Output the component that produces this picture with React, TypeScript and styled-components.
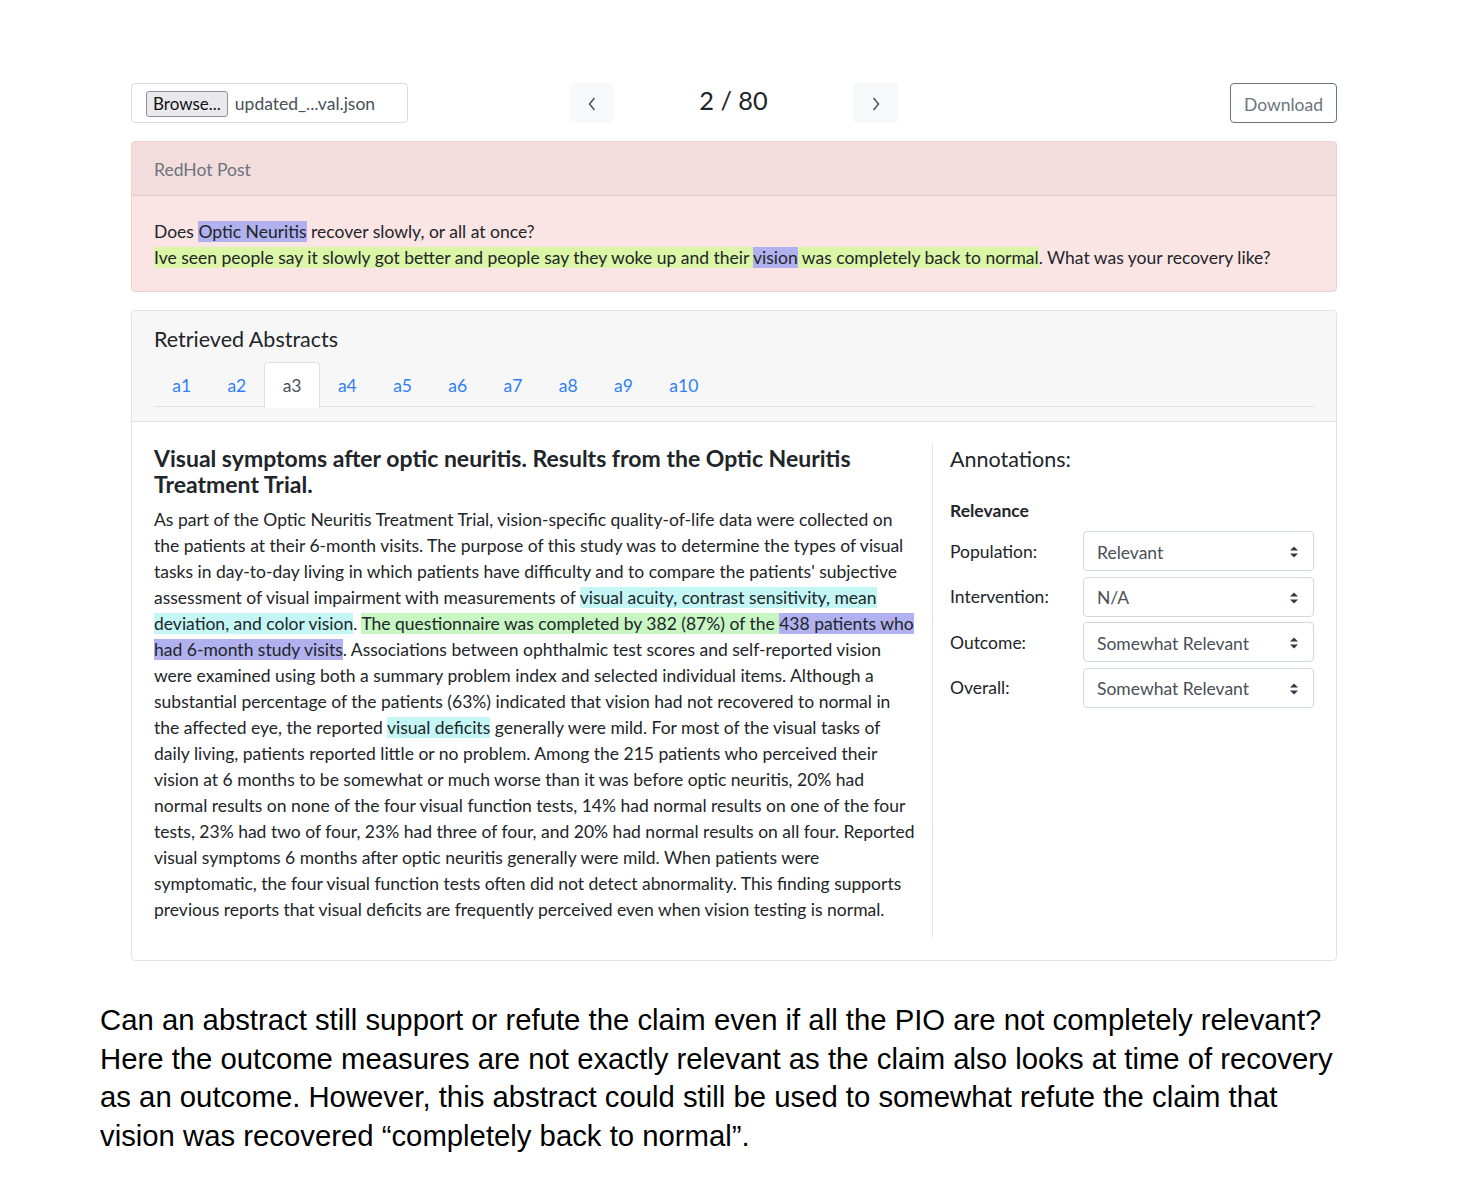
import React from "react";
import styled, { createGlobalStyle } from "styled-components";

const Global = createGlobalStyle`
  html, body { margin: 0; padding: 0; background: #fff; }
  body { font-family: Lato, "Noto Sans", sans-serif; color: #212529; }
  * { box-sizing: border-box; }
`;

const Page = styled.div`
  padding-top: 83px;
  padding-bottom: 30px;
`;

const Container = styled.div`
  width: 1206px;
  margin-left: 131px;
`;

const Toolbar = styled.div`
  display: flex;
  align-items: center;
  height: 40px;
`;

const FileBox = styled.div`
  width: 277px;
  height: 40px;
  border: 1px solid #d9dde1;
  border-radius: 4px;
  display: flex;
  align-items: center;
  padding: 1px 0 0 14px;
  gap: 7px;
  font-size: 17.5px;
`;

const BrowseBtn = styled.div`
  height: 26px;
  padding: 0 6px;
  border: 1px solid #8f8f9d;
  border-radius: 3px;
  background: #e9e9ed;
  color: #111;
  font-size: 17px;
  display: flex;
  align-items: center;
`;

const FileName = styled.span`
  color: #495057;
`;

const Pager = styled.div`
  display: flex;
  align-items: center;
  margin-left: 161px;
`;

const NavBtn = styled.div`
  width: 45px;
  height: 40px;
  border-radius: 4px;
  background: #f8f9fa;
  display: flex;
  align-items: center;
  justify-content: center;
  padding-top: 2px;
`;

const Counter = styled.div`
  width: 239px;
  text-align: center;
  font-size: 25.3px;
  margin-top: -6px;
  color: #212529;
`;

const DownloadBtn = styled.div`
  margin-left: auto;
  height: 40px;
  width: 107px;
  justify-content: center;
  border: 1px solid #6c757d;
  border-radius: 4px;
  color: #6c757d;
  font-size: 17.5px;
  display: flex;
  align-items: center;
  padding-top: 2px;
`;

const Card = styled.div<{ $tone?: "danger" | "plain" }>`
  margin-top: 18px;
  border: 1px solid ${(p) => (p.$tone === "danger" ? "#efcfd0" : "#e3e3e3")};
  border-radius: 4px;
  background: ${(p) => (p.$tone === "danger" ? "#fbe4e4" : "#fff")};
  overflow: hidden;
`;

const PostHeader = styled.div`
  height: 54px;
  padding: 2px 22px 0;
  display: flex;
  align-items: center;
  background: #f2dcdc;
  border-bottom: 1px solid #e6cccd;
  color: #6c757d;
  font-size: 17.5px;
`;

const PostBody = styled.div`
  padding: 23px 22px 20px;
  font-size: 17.5px;
  line-height: 26px;
`;

const Mark = styled.span<{ $c: "purple" | "lime" | "cyan" | "green" }>`
  background: ${(p) =>
    ({ purple: "#b1b1ef", lime: "#dcf6a7", cyan: "#c4f6f5", green: "#c7f6c2" })[p.$c]};
`;

const AbsHeader = styled.div`
  background: #f7f7f7;
  border-bottom: 1px solid #e3e3e3;
  padding: 15px 22px 14px;
`;

const AbsTitle = styled.div`
  font-size: 21.5px;
  line-height: 26px;
  color: #212529;
  margin-bottom: 10px;
`;

const Tabs = styled.div`
  display: flex;
  border-bottom: 1px solid #dee2e6;
  height: 45px;
`;

const Tab = styled.div<{ $active?: boolean }>`
  height: 46px;
  padding: 0 17.2px;
  display: flex;
  align-items: center;
  font-size: 17.5px;
  color: ${(p) => (p.$active ? "#495057" : "#2f80f7")};
  background: ${(p) => (p.$active ? "#fff" : "transparent")};
  border: 1px solid ${(p) => (p.$active ? "#dee2e6" : "transparent")};
  border-bottom: none;
  border-radius: 4px 4px 0 0;
  margin-bottom: -1px;
`;

const AbsBody = styled.div`
  padding: 21px 22px 22px;
  display: flex;
`;

const LeftCol = styled.div`
  width: 779px;
  padding: 2px 16px 0 0;
  border-right: 1px solid #e6e6e6;
`;

const Title = styled.h5`
  margin: 0 0 10px;
  font-size: 23px;
  line-height: 26px;
  font-weight: 700;
  color: #212529;
`;

const Abstract = styled.p`
  margin: 0 0 15px;
  font-size: 17.5px;
  line-height: 26px;
  color: #212529;
`;

const RightCol = styled.div`
  flex: 1;
  padding: 3px 0 0 17px;
`;

const AnnTitle = styled.div`
  font-size: 21.5px;
  line-height: 26px;
  color: #212529;
  margin-bottom: 26px;
`;

const SubTitle = styled.div`
  font-size: 17.5px;
  line-height: 26px;
  font-weight: 700;
  margin-bottom: 7px;
`;

const Fields = styled.div`
  display: flex;
  flex-direction: column;
  gap: 5.6px;
`;

const Field = styled.div`
  display: grid;
  grid-template-columns: 133px 1fr;
  align-items: center;
  font-size: 17.5px;
`;

const SelectBox = styled.div`
  position: relative;
  height: 40px;
  border: 1px solid #d3d8dc;
  border-radius: 4px;
  padding: 2px 0 0 13px;
  display: flex;
  align-items: center;
  color: #495057;
  font-size: 17.5px;
`;

const Caret = styled.svg`
  position: absolute;
  right: 14px;
  top: 14px;
`;

const Note = styled.p`
  margin: 40px 0 0 100px;
  width: 1250px;
  font-family: "Liberation Sans", Arial, sans-serif;
  font-size: 29.3px;
  line-height: 38.5px;
  color: #000;
`;

const Chevron = ({ dir }: { dir: "l" | "r" }) => (
  <svg width="10" height="16" viewBox="0 0 10 16">
    <path
      d={dir === "l" ? "M7.5 2 L2.5 8 L7.5 14" : "M2.5 2 L7.5 8 L2.5 14"}
      fill="none"
      stroke="#495057"
      strokeWidth="1.5"
    />
  </svg>
);

const Select = ({ value }: { value: string }) => (
  <SelectBox>
    {value}
    <Caret width="10" height="12" viewBox="0 0 10 12">
      <path d="M5 0.5 L9 4.5 H1 Z M5 11.5 L9 7.5 H1 Z" fill="#343a40" />
    </Caret>
  </SelectBox>
);

const tabs = ["a1", "a2", "a3", "a4", "a5", "a6", "a7", "a8", "a9", "a10"];

export default function App() {
  return (
    <>
      <Global />
      <Page>
        <Container>
          <Toolbar>
            <FileBox>
              <BrowseBtn>Browse...</BrowseBtn>
              <FileName>updated_...val.json</FileName>
            </FileBox>
            <Pager>
              <NavBtn>
                <Chevron dir="l" />
              </NavBtn>
              <Counter>2 / 80</Counter>
              <NavBtn>
                <Chevron dir="r" />
              </NavBtn>
            </Pager>
            <DownloadBtn>Download</DownloadBtn>
          </Toolbar>

          <Card $tone="danger">
            <PostHeader>RedHot Post</PostHeader>
            <PostBody>
              Does <Mark $c="purple">Optic Neuritis</Mark> recover slowly, or all at once?
              <br />
              <Mark $c="lime">Ive seen people say it slowly got better and people say they woke up and their </Mark>
              <Mark $c="purple">vision</Mark>
              <Mark $c="lime"> was completely back to normal</Mark>. What was your recovery like?
            </PostBody>
          </Card>

          <Card $tone="plain">
            <AbsHeader>
              <AbsTitle>Retrieved Abstracts</AbsTitle>
              <Tabs>
                {tabs.map((t) => (
                  <Tab key={t} $active={t === "a3"}>
                    {t}
                  </Tab>
                ))}
              </Tabs>
            </AbsHeader>
            <AbsBody>
              <LeftCol>
                <Title>
                  Visual symptoms after optic neuritis. Results from the Optic Neuritis Treatment Trial.
                </Title>
                <Abstract>
                  As part of the Optic Neuritis Treatment Trial, vision-specific quality-of-life data were
                  collected on the patients at their 6-month visits. The purpose of this study was to
                  determine the types of visual tasks in day-to-day living in which patients have difficulty
                  and to compare the patients' subjective assessment of visual impairment with measurements
                  of{" "}
                  <Mark $c="cyan">visual acuity, contrast sensitivity, mean deviation, and color vision</Mark>.{" "}
                  <Mark $c="green">The questionnaire was completed by 382 (87%) of the </Mark>
                  <Mark $c="purple">438 patients who had 6-month study visits</Mark>. Associations between
                  ophthalmic test scores and self-reported vision were examined using both a summary problem
                  index and selected individual items. Although a substantial percentage of the patients (63%)
                  indicated that vision had not recovered to normal in the affected eye, the reported{" "}
                  <Mark $c="cyan">visual deficits</Mark> generally were mild. For most of the visual tasks of
                  daily living, patients reported little or no problem. Among the 215 patients who perceived
                  their vision at 6 months to be somewhat or much worse than it was before optic neuritis, 20%
                  had normal results on none of the four visual function tests, 14% had normal results on one
                  of the four tests, 23% had two of four, 23% had three of four, and 20% had normal results on
                  all four. Reported visual symptoms 6 months after optic neuritis generally were mild. When
                  patients were symptomatic, the four visual function tests often did not detect abnormality.
                  This finding supports previous reports that visual deficits are frequently perceived even
                  when vision testing is normal.
                </Abstract>
              </LeftCol>
              <RightCol>
                <AnnTitle>Annotations:</AnnTitle>
                <SubTitle>Relevance</SubTitle>
                <Fields>
                  <Field>
                    <span>Population:</span>
                    <Select value="Relevant" />
                  </Field>
                  <Field>
                    <span>Intervention:</span>
                    <Select value="N/A" />
                  </Field>
                  <Field>
                    <span>Outcome:</span>
                    <Select value="Somewhat Relevant" />
                  </Field>
                  <Field>
                    <span>Overall:</span>
                    <Select value="Somewhat Relevant" />
                  </Field>
                </Fields>
              </RightCol>
            </AbsBody>
          </Card>
        </Container>
        <Note>
          Can an abstract still support or refute the claim even if all the PIO are not completely
          relevant? Here the outcome measures are not exactly relevant as the claim also looks at time of
          recovery as an outcome. However, this abstract could still be used to somewhat refute the claim
          that vision was recovered “completely back to normal”.
        </Note>
      </Page>
    </>
  );
}
